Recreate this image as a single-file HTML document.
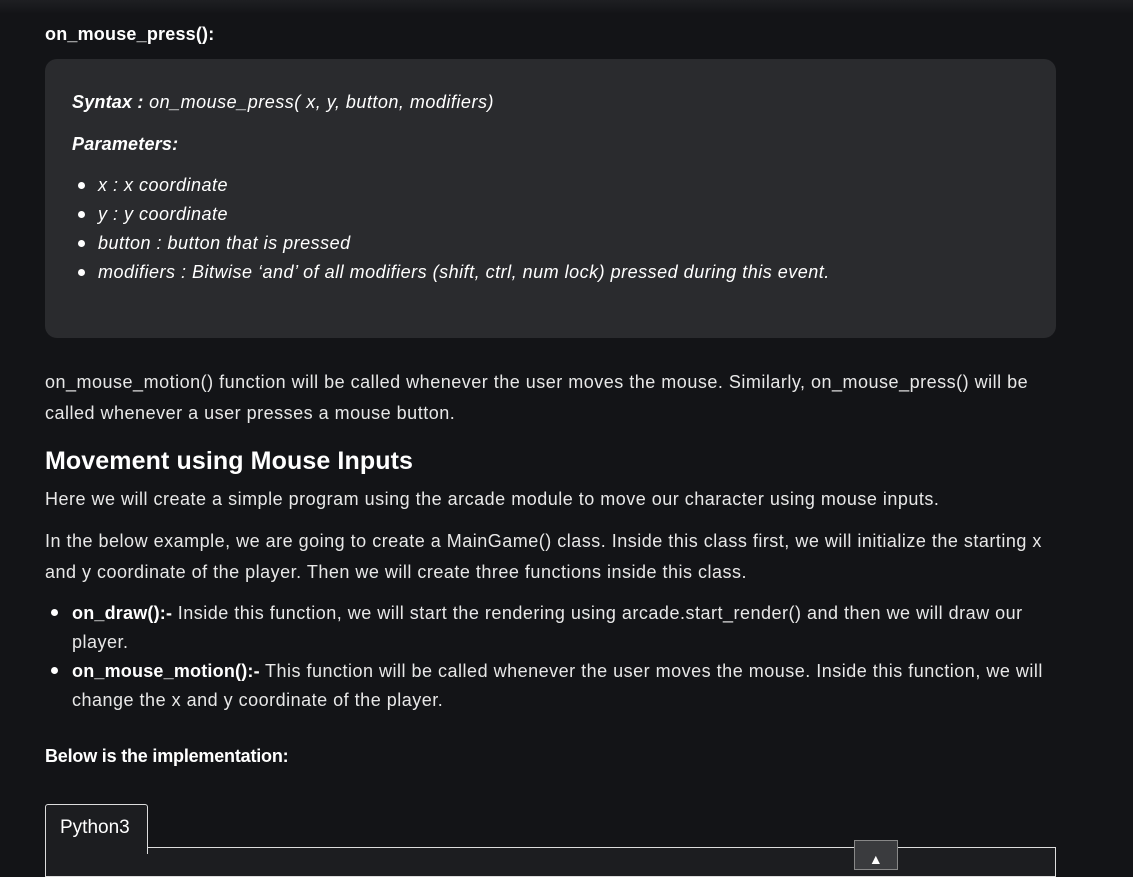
<!DOCTYPE html>
<html><head><meta charset="utf-8"><style>
*{margin:0;padding:0;box-sizing:border-box}
body{width:1133px;height:864px;overflow:hidden;background:#131417;color:#e8e8e8;font-family:"Liberation Sans",sans-serif;font-size:18px;letter-spacing:0.5px;position:relative}
.top{position:absolute;left:0;top:0;width:1133px;height:14px;background:linear-gradient(#1e1f22,#131417)}
.a{position:absolute;left:45px}
b{font-weight:bold;color:#fff;letter-spacing:0.2px}
.box{position:absolute;left:45px;top:59px;width:1011px;height:279px;background:#2a2b2e;border-radius:12px}
i.lbl{font-style:italic;color:#fff}
.dot{position:absolute;left:78px;width:7px;height:7px;border-radius:50%;background:#fff}
.lbl{position:absolute;white-space:nowrap}
</style></head><body>
<div class="top"></div>
<div class="lbl a" style="top:24px"><b>on_mouse_press():</b></div>
<div class="box"></div>
<i class="lbl" style="left:72px;top:92px"><b>Syntax :</b> on_mouse_press( x, y, button, modifiers)</i>
<i class="lbl" style="left:72px;top:134px"><b>Parameters:</b></i>
<div class="dot" style="top:182px"></div><i class="lbl" style="left:98px;top:175px">x : x coordinate</i>
<div class="dot" style="top:211px"></div><i class="lbl" style="left:98px;top:204px">y : y coordinate</i>
<div class="dot" style="top:240px"></div><i class="lbl" style="left:98px;top:233px">button : button that is pressed</i>
<div class="dot" style="top:269px"></div><i class="lbl" style="left:98px;top:262px">modifiers : Bitwise ‘and’ of all modifiers (shift, ctrl, num lock) pressed during this event.</i>
<div class="lbl a" style="top:372px">on_mouse_motion() function will be called whenever the user moves the mouse. Similarly, on_mouse_press() will be</div>
<div class="lbl a" style="top:403px">called whenever a user presses a mouse button.</div>
<div class="lbl a" style="top:447px;font-size:25px;letter-spacing:0.1px;font-weight:bold;color:#fff">Movement using Mouse Inputs</div>
<div class="lbl a" style="top:489px">Here we will create a simple program using the arcade module to move our character using mouse inputs.</div>
<div class="lbl a" style="top:531px">In the below example, we are going to create a MainGame() class. Inside this class first, we will initialize the starting x</div>
<div class="lbl a" style="top:562px">and y coordinate of the player. Then we will create three functions inside this class.</div>
<div class="dot" style="left:51px;top:609px"></div>
<div class="lbl" style="left:72px;top:603px"><b>on_draw():-</b> Inside this function, we will start the rendering using arcade.start_render() and then we will draw our</div>
<div class="lbl" style="left:72px;top:632px">player.</div>
<div class="dot" style="left:51px;top:667px"></div>
<div class="lbl" style="left:72px;top:661px"><b>on_mouse_motion():-</b> This function will be called whenever the user moves the mouse. Inside this function, we will</div>
<div class="lbl" style="left:72px;top:690px">change the x and y coordinate of the player.</div>
<div class="lbl a" style="top:746px"><b style="letter-spacing:-0.2px">Below is the implementation:</b></div>
<div style="position:absolute;left:45px;top:847px;width:1011px;height:30px;border:1px solid #ddd;background:#1c1d20"></div>
<div style="position:absolute;left:45px;top:804px;width:103px;height:50px;border:1px solid #ddd;border-bottom:none;border-radius:3px 3px 0 0;background:#1c1d20;color:#fff;font-size:19px;letter-spacing:0;padding:12px 0 0 14px">Python3</div>
<div style="position:absolute;left:854px;top:840px;width:44px;height:30px;border:1px solid #888;background:#3a3b3e;color:#fff;text-align:center;font-size:14px;padding-top:10px">▲</div>
</body></html>
